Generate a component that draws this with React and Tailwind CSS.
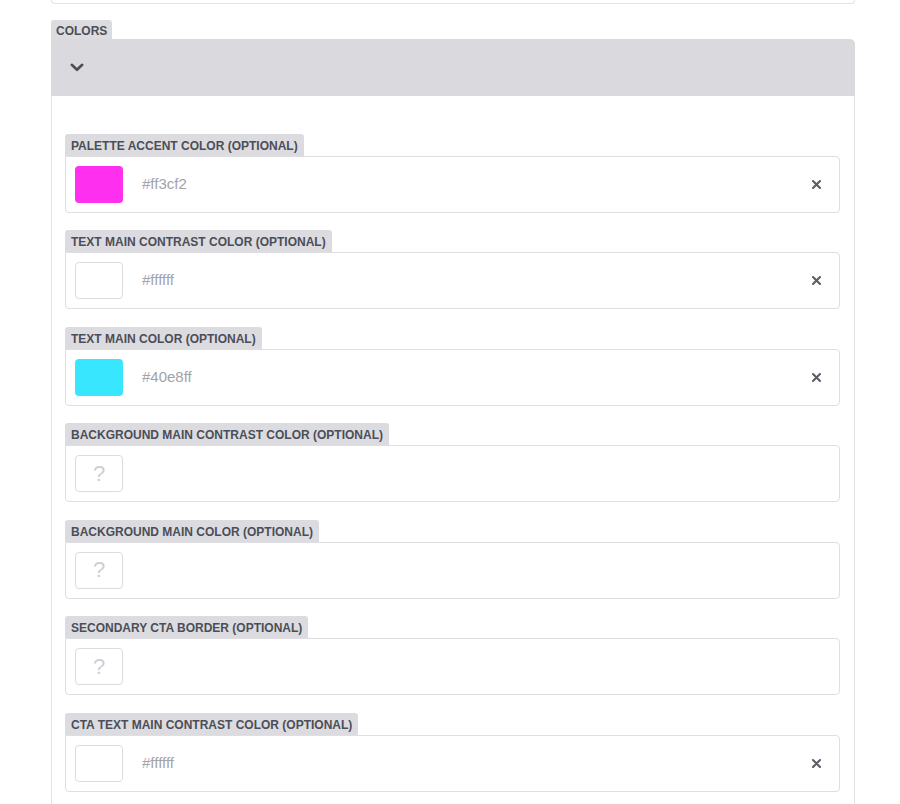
import React from "react";

const fields = [
  { label: "PALETTE ACCENT COLOR (OPTIONAL)", value: "#ff3cf2", color: "#ff2ff0" },
  { label: "TEXT MAIN CONTRAST COLOR (OPTIONAL)", value: "#ffffff", color: "#ffffff" },
  { label: "TEXT MAIN COLOR (OPTIONAL)", value: "#40e8ff", color: "#38e6fe" },
  { label: "BACKGROUND MAIN CONTRAST COLOR (OPTIONAL)", value: null },
  { label: "BACKGROUND MAIN COLOR (OPTIONAL)", value: null },
  { label: "SECONDARY CTA BORDER (OPTIONAL)", value: null },
  { label: "CTA TEXT MAIN CONTRAST COLOR (OPTIONAL)", value: "#ffffff", color: "#ffffff" },
];

function XIcon() {
  return (
    <svg width="11" height="11" viewBox="0 0 11 11" className="block">
      <path d="M2 2 L9 9 M9 2 L2 9" stroke="#5a5d66" strokeWidth="2.1" strokeLinecap="round" />
    </svg>
  );
}

function Field({ f }) {
  const white = f.color === "#ffffff";
  return (
    <div className="mb-[17.5px]">
      <div className="flex">
        <div className="h-[22px] px-[6px] bg-[#dcdce0] rounded-t-[3px] text-[12px] font-bold text-[#4b4e58] leading-[24px] whitespace-nowrap">
          {f.label}
        </div>
      </div>
      <div className="h-[57px] border border-[#dfdfe3] rounded-b-[4px] rounded-tr-[4px] flex items-center pl-[9px] pr-[17px]">
        {f.value ? (
          <>
            <div
              className={`w-[48px] h-[37px] rounded-[4px] ${white ? "border border-[#dcdce0]" : ""}`}
              style={{ backgroundColor: f.color }}
            />
            <div className="ml-[19px] text-[15px] text-[#a3a3a9] flex-1">{f.value}</div>
            <XIcon />
          </>
        ) : (
          <div className="w-[48px] h-[37px] rounded-[4px] border border-[#dcdce0] flex items-center justify-center text-[22px] text-[#cfcfd3] leading-none">
            ?
          </div>
        )}
      </div>
    </div>
  );
}

export default function App() {
  return (
    <div className="w-[900px] h-[804px] bg-white overflow-hidden" style={{ fontFamily: '"Liberation Sans", Arial, sans-serif' }}>
      <div className="ml-[51px] w-[804px]">
        <div className="h-[4px] border-x border-b border-[#e3e3e6] rounded-b-[5px]" />
        <div className="mt-[16px] flex">
          <div className="h-[19px] px-[5px] bg-[#dcdce0] rounded-t-[3px] text-[12px] font-bold text-[#4b4e58] leading-[23px]">
            COLORS
          </div>
        </div>
        <div className="h-[57px] bg-[#dadade] rounded-tr-[5px] flex items-center pl-[19px]">
          <svg width="14" height="9" viewBox="0 0 14 9">
            <path d="M1.8 1.8 L7 6.8 L12.2 1.8" fill="none" stroke="#4b4e58" strokeWidth="2.6" strokeLinecap="round" strokeLinejoin="round" />
          </svg>
        </div>
        <div className="border-x border-[#e3e3e6] pt-[37.5px] pl-[13px] pr-[14px] h-[800px]">
          {fields.map((f) => (
            <Field key={f.label} f={f} />
          ))}
        </div>
      </div>
    </div>
  );
}
